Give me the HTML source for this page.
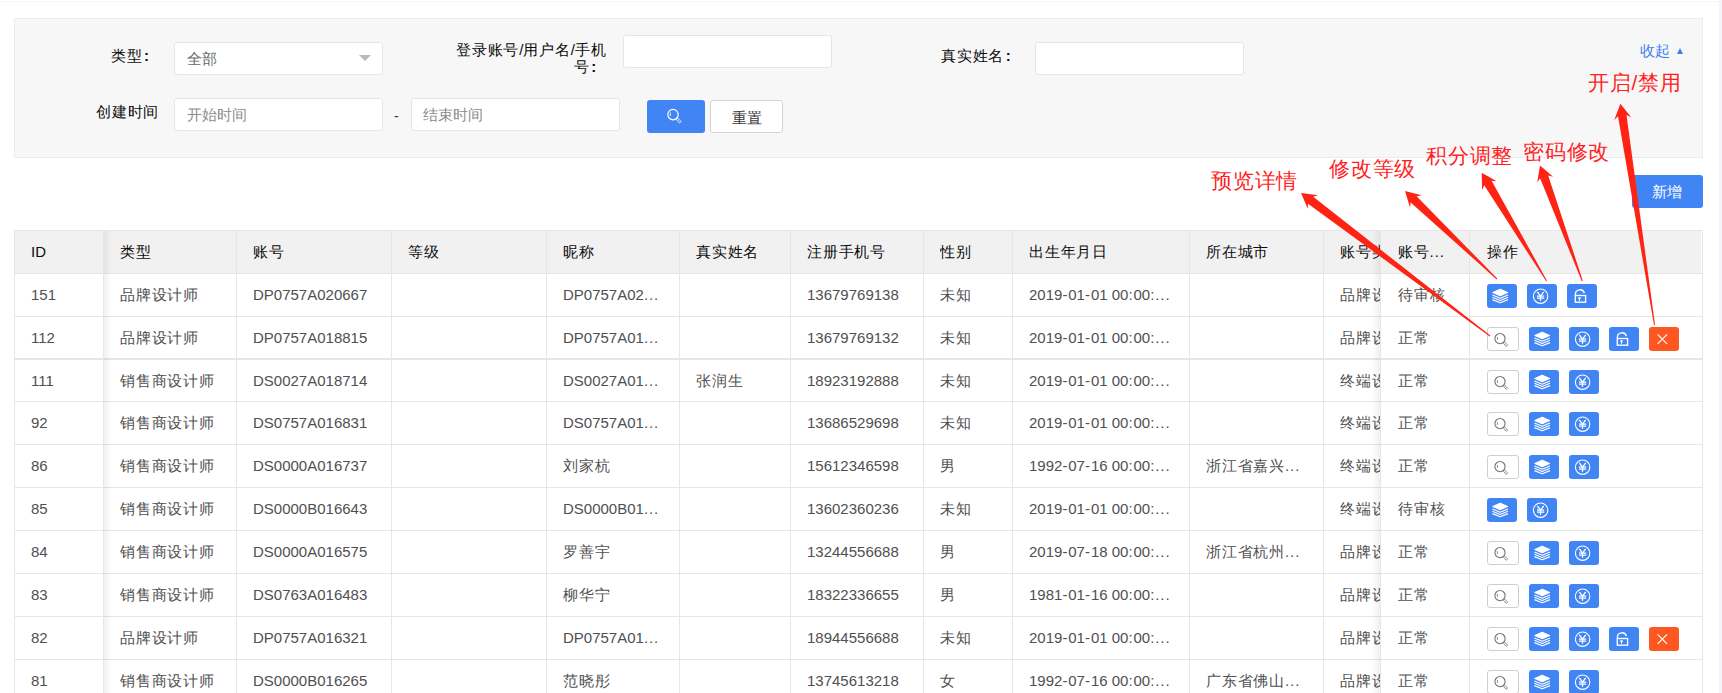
<!DOCTYPE html><html><head><meta charset="utf-8"><style>
*{margin:0;padding:0;box-sizing:border-box}
html,body{width:1722px;height:693px;overflow:hidden;background:#fff}
body{position:relative;font-family:"Liberation Sans",sans-serif;}
.a{position:absolute}
.t{position:absolute;white-space:nowrap;line-height:1}
.lbl{font-size:15px;color:#0a0a0a}
.inp{position:absolute;background:#fff;border:1px solid #e5e5e6;border-radius:3px}
.ph{position:absolute;font-size:15px;color:#8c8c8c;white-space:nowrap;line-height:1}
.hl{position:absolute;height:1px;background:#e6e6e6}
.vl{position:absolute;width:1px;background:#e6e6e6}
.c{position:absolute;white-space:nowrap;line-height:1;font-size:15px;color:#505050;overflow:hidden}
.h{position:absolute;white-space:nowrap;line-height:1;font-size:15px;color:#0c0c0c;overflow:hidden}
.btn{position:absolute;width:30px;height:24px;border-radius:3px;background:#4185f4}
.btn svg{position:absolute;left:0;top:0}
.sbtn{position:absolute;width:32px;height:24px;border-radius:3px;background:#fff;border:1px solid #cfcfcf}
.rbtn{position:absolute;width:30px;height:24px;border-radius:3px;background:#fe5722}
.k{letter-spacing:0.8px}
.p{letter-spacing:0.9px}
.ann{position:absolute;white-space:nowrap;line-height:1;font-size:21px;color:#ff1f1f;letter-spacing:0.8px}
</style></head><body>
<div class="a" style="left:0;top:1px;width:1719px;height:1px;background:#f6f6f6"></div>
<div class="a" style="left:1719px;top:0;width:3px;height:693px;background:#f4f5f8"></div>
<div class="a" style="left:14px;top:18px;width:1689px;height:140px;background:#f7f7f7;border:1px solid #ececee"></div>
<div class="t lbl" style="left:111px;top:48px"><span class="k">类型</span><span style="margin-left:1.5px;font-weight:bold">:</span></div>
<div class="inp" style="left:174px;top:42px;width:209px;height:33px"></div>
<div class="ph" style="left:187px;top:51px;color:#6a6a6a">全部</div>
<div class="a" style="left:359px;top:55px;width:0;height:0;border-left:6px solid transparent;border-right:6px solid transparent;border-top:6px solid #b9b9b9"></div>
<div class="t lbl" style="left:456px;top:42px"><span class="k">登录账号</span>/<span class="k">用户名</span>/<span class="k">手机</span></div>
<div class="t lbl" style="left:574px;top:59px"><span class="k">号</span><span style="margin-left:1.5px;font-weight:bold">:</span></div>
<div class="inp" style="left:623px;top:35px;width:209px;height:33px"></div>
<div class="t lbl" style="left:941px;top:48px"><span class="k">真实姓名</span><span style="margin-left:1.5px;font-weight:bold">:</span></div>
<div class="inp" style="left:1035px;top:42px;width:209px;height:33px"></div>
<div class="t" style="left:1640px;top:44px;font-size:14.5px;color:#3d7ef0">收起</div>
<div class="a" style="left:1677px;top:48px;width:0;height:0;border-left:3.5px solid transparent;border-right:3.5px solid transparent;border-bottom:6px solid #3d7ef0"></div>
<div class="t lbl" style="left:96px;top:104px"><span class="k">创建时间</span></div>
<div class="inp" style="left:174px;top:98px;width:209px;height:33px"></div>
<div class="ph" style="left:187px;top:107px">开始时间</div>
<div class="t" style="left:394px;top:109px;font-size:14px;color:#333">-</div>
<div class="inp" style="left:411px;top:98px;width:209px;height:33px"></div>
<div class="ph" style="left:423px;top:107px">结束时间</div>
<div class="a" style="left:647px;top:100px;width:58px;height:33px;border-radius:3px;background:#4185f4"><svg width="58" height="33" style="position:absolute;left:0;top:0"><circle cx="26" cy="14.6" r="5.2" fill="none" stroke="#fff" stroke-width="1.2"/><rect x="-1" y="-2.7" width="2" height="5.4" transform="translate(31.4 20.3) rotate(-45)" fill="none" stroke="#fff" stroke-width="0.9"/><path d="M23.3 12.5 V16" stroke="#fff" stroke-width="0.9"/></svg></div>
<div class="a" style="left:710px;top:100px;width:73px;height:33px;border-radius:3px;background:#fff;border:1px solid #d4d4d4"></div>
<div class="t" style="left:732px;top:110px;font-size:15px;color:#383838">重置</div>
<div class="a" style="left:1632px;top:175px;width:71px;height:33px;border-radius:3px;background:#4185f4"></div>
<div class="t" style="left:1652px;top:184px;font-size:15px;color:#fff">新增</div>
<div class="a" style="left:15px;top:231px;width:1686px;height:42px;background:#f1f1f1"></div>
<div class="hl" style="left:14px;top:230px;width:1689px"></div>
<div class="vl" style="left:14px;top:230px;height:463px"></div>
<div class="vl" style="left:1702px;top:230px;height:463px"></div>
<div class="hl" style="left:14px;top:273px;width:1689px"></div>
<div class="hl" style="left:14px;top:316px;width:1689px"></div>
<div class="hl" style="left:14px;top:358px;width:1689px"></div>
<div class="hl" style="left:14px;top:359px;width:1689px"></div>
<div class="hl" style="left:14px;top:401px;width:1689px"></div>
<div class="hl" style="left:14px;top:444px;width:1689px"></div>
<div class="hl" style="left:14px;top:487px;width:1689px"></div>
<div class="hl" style="left:14px;top:530px;width:1689px"></div>
<div class="hl" style="left:14px;top:573px;width:1689px"></div>
<div class="hl" style="left:14px;top:616px;width:1689px"></div>
<div class="hl" style="left:14px;top:659px;width:1689px"></div>
<div class="vl" style="left:103px;top:230px;height:463px"></div>
<div class="vl" style="left:236px;top:230px;height:463px"></div>
<div class="vl" style="left:391px;top:230px;height:463px"></div>
<div class="vl" style="left:546px;top:230px;height:463px"></div>
<div class="vl" style="left:679px;top:230px;height:463px"></div>
<div class="vl" style="left:790px;top:230px;height:463px"></div>
<div class="vl" style="left:923px;top:230px;height:463px"></div>
<div class="vl" style="left:1012px;top:230px;height:463px"></div>
<div class="vl" style="left:1189px;top:230px;height:463px"></div>
<div class="vl" style="left:1323px;top:230px;height:463px"></div>
<div class="vl" style="left:1469px;top:230px;height:463px"></div>
<div class="h" style="left:31px;top:244.0px;width:70px;height:17px;line-height:15px">ID</div>
<div class="h" style="left:120px;top:244.0px;width:114px;height:17px;line-height:15px"><span class="k">类型</span></div>
<div class="h" style="left:253px;top:244.0px;width:136px;height:17px;line-height:15px"><span class="k">账号</span></div>
<div class="h" style="left:408px;top:244.0px;width:136px;height:17px;line-height:15px"><span class="k">等级</span></div>
<div class="h" style="left:563px;top:244.0px;width:114px;height:17px;line-height:15px"><span class="k">昵称</span></div>
<div class="h" style="left:696px;top:244.0px;width:92px;height:17px;line-height:15px"><span class="k">真实姓名</span></div>
<div class="h" style="left:807px;top:244.0px;width:114px;height:17px;line-height:15px"><span class="k">注册手机号</span></div>
<div class="h" style="left:940px;top:244.0px;width:70px;height:17px;line-height:15px"><span class="k">性别</span></div>
<div class="h" style="left:1029px;top:244.0px;width:158px;height:17px;line-height:15px"><span class="k">出生年月日</span></div>
<div class="h" style="left:1206px;top:244.0px;width:115px;height:17px;line-height:15px"><span class="k">所在城市</span></div>
<div class="h" style="left:1340px;top:244.0px;width:40px;height:17px;line-height:15px"><span class="k">账号类型</span></div>
<div class="h" style="left:1398px;top:244.0px;width:69px;height:17px;line-height:15px"><span class="k">账号</span><span class="p">...</span></div>
<div class="h" style="left:1487px;top:244.0px;width:213px;height:17px;line-height:15px"><span class="k">操作</span></div>
<div class="c" style="left:31px;top:287.0px;width:70px;height:17px;line-height:15px">151</div>
<div class="c" style="left:120px;top:287.0px;width:114px;height:17px;line-height:15px"><span class="k">品牌设计师</span></div>
<div class="c" style="left:253px;top:287.0px;width:136px;height:17px;line-height:15px">DP0757A020667</div>
<div class="c" style="left:563px;top:287.0px;width:114px;height:17px;line-height:15px">DP0757A02<span class="p">...</span></div>
<div class="c" style="left:807px;top:287.0px;width:114px;height:17px;line-height:15px">13679769138</div>
<div class="c" style="left:940px;top:287.0px;width:70px;height:17px;line-height:15px"><span class="k">未知</span></div>
<div class="c" style="left:1029px;top:287.0px;width:158px;height:17px;line-height:15px">2019<span class="p">-</span>01<span class="p">-</span>01 00<span class="p">:</span>00<span class="p">:...</span></div>
<div class="c" style="left:1340px;top:287.0px;width:40px;height:17px;line-height:15px"><span class="k">品牌设计师</span></div>
<div class="c" style="left:1398px;top:287.0px;width:69px;height:17px;line-height:15px"><span class="k">待审核</span></div>
<div class="c" style="left:31px;top:330.0px;width:70px;height:17px;line-height:15px">112</div>
<div class="c" style="left:120px;top:330.0px;width:114px;height:17px;line-height:15px"><span class="k">品牌设计师</span></div>
<div class="c" style="left:253px;top:330.0px;width:136px;height:17px;line-height:15px">DP0757A018815</div>
<div class="c" style="left:563px;top:330.0px;width:114px;height:17px;line-height:15px">DP0757A01<span class="p">...</span></div>
<div class="c" style="left:807px;top:330.0px;width:114px;height:17px;line-height:15px">13679769132</div>
<div class="c" style="left:940px;top:330.0px;width:70px;height:17px;line-height:15px"><span class="k">未知</span></div>
<div class="c" style="left:1029px;top:330.0px;width:158px;height:17px;line-height:15px">2019<span class="p">-</span>01<span class="p">-</span>01 00<span class="p">:</span>00<span class="p">:...</span></div>
<div class="c" style="left:1340px;top:330.0px;width:40px;height:17px;line-height:15px"><span class="k">品牌设计师</span></div>
<div class="c" style="left:1398px;top:330.0px;width:69px;height:17px;line-height:15px"><span class="k">正常</span></div>
<div class="c" style="left:31px;top:373.0px;width:70px;height:17px;line-height:15px">111</div>
<div class="c" style="left:120px;top:373.0px;width:114px;height:17px;line-height:15px"><span class="k">销售商设计师</span></div>
<div class="c" style="left:253px;top:373.0px;width:136px;height:17px;line-height:15px">DS0027A018714</div>
<div class="c" style="left:563px;top:373.0px;width:114px;height:17px;line-height:15px">DS0027A01<span class="p">...</span></div>
<div class="c" style="left:696px;top:373.0px;width:92px;height:17px;line-height:15px"><span class="k">张润生</span></div>
<div class="c" style="left:807px;top:373.0px;width:114px;height:17px;line-height:15px">18923192888</div>
<div class="c" style="left:940px;top:373.0px;width:70px;height:17px;line-height:15px"><span class="k">未知</span></div>
<div class="c" style="left:1029px;top:373.0px;width:158px;height:17px;line-height:15px">2019<span class="p">-</span>01<span class="p">-</span>01 00<span class="p">:</span>00<span class="p">:...</span></div>
<div class="c" style="left:1340px;top:373.0px;width:40px;height:17px;line-height:15px"><span class="k">终端设计师</span></div>
<div class="c" style="left:1398px;top:373.0px;width:69px;height:17px;line-height:15px"><span class="k">正常</span></div>
<div class="c" style="left:31px;top:415.0px;width:70px;height:17px;line-height:15px">92</div>
<div class="c" style="left:120px;top:415.0px;width:114px;height:17px;line-height:15px"><span class="k">销售商设计师</span></div>
<div class="c" style="left:253px;top:415.0px;width:136px;height:17px;line-height:15px">DS0757A016831</div>
<div class="c" style="left:563px;top:415.0px;width:114px;height:17px;line-height:15px">DS0757A01<span class="p">...</span></div>
<div class="c" style="left:807px;top:415.0px;width:114px;height:17px;line-height:15px">13686529698</div>
<div class="c" style="left:940px;top:415.0px;width:70px;height:17px;line-height:15px"><span class="k">未知</span></div>
<div class="c" style="left:1029px;top:415.0px;width:158px;height:17px;line-height:15px">2019<span class="p">-</span>01<span class="p">-</span>01 00<span class="p">:</span>00<span class="p">:...</span></div>
<div class="c" style="left:1340px;top:415.0px;width:40px;height:17px;line-height:15px"><span class="k">终端设计师</span></div>
<div class="c" style="left:1398px;top:415.0px;width:69px;height:17px;line-height:15px"><span class="k">正常</span></div>
<div class="c" style="left:31px;top:458.0px;width:70px;height:17px;line-height:15px">86</div>
<div class="c" style="left:120px;top:458.0px;width:114px;height:17px;line-height:15px"><span class="k">销售商设计师</span></div>
<div class="c" style="left:253px;top:458.0px;width:136px;height:17px;line-height:15px">DS0000A016737</div>
<div class="c" style="left:563px;top:458.0px;width:114px;height:17px;line-height:15px"><span class="k">刘家杭</span></div>
<div class="c" style="left:807px;top:458.0px;width:114px;height:17px;line-height:15px">15612346598</div>
<div class="c" style="left:940px;top:458.0px;width:70px;height:17px;line-height:15px"><span class="k">男</span></div>
<div class="c" style="left:1029px;top:458.0px;width:158px;height:17px;line-height:15px">1992<span class="p">-</span>07<span class="p">-</span>16 00<span class="p">:</span>00<span class="p">:...</span></div>
<div class="c" style="left:1206px;top:458.0px;width:115px;height:17px;line-height:15px"><span class="k">浙江省嘉兴</span><span class="p">...</span></div>
<div class="c" style="left:1340px;top:458.0px;width:40px;height:17px;line-height:15px"><span class="k">终端设计师</span></div>
<div class="c" style="left:1398px;top:458.0px;width:69px;height:17px;line-height:15px"><span class="k">正常</span></div>
<div class="c" style="left:31px;top:501.0px;width:70px;height:17px;line-height:15px">85</div>
<div class="c" style="left:120px;top:501.0px;width:114px;height:17px;line-height:15px"><span class="k">销售商设计师</span></div>
<div class="c" style="left:253px;top:501.0px;width:136px;height:17px;line-height:15px">DS0000B016643</div>
<div class="c" style="left:563px;top:501.0px;width:114px;height:17px;line-height:15px">DS0000B01<span class="p">...</span></div>
<div class="c" style="left:807px;top:501.0px;width:114px;height:17px;line-height:15px">13602360236</div>
<div class="c" style="left:940px;top:501.0px;width:70px;height:17px;line-height:15px"><span class="k">未知</span></div>
<div class="c" style="left:1029px;top:501.0px;width:158px;height:17px;line-height:15px">2019<span class="p">-</span>01<span class="p">-</span>01 00<span class="p">:</span>00<span class="p">:...</span></div>
<div class="c" style="left:1340px;top:501.0px;width:40px;height:17px;line-height:15px"><span class="k">终端设计师</span></div>
<div class="c" style="left:1398px;top:501.0px;width:69px;height:17px;line-height:15px"><span class="k">待审核</span></div>
<div class="c" style="left:31px;top:544.0px;width:70px;height:17px;line-height:15px">84</div>
<div class="c" style="left:120px;top:544.0px;width:114px;height:17px;line-height:15px"><span class="k">销售商设计师</span></div>
<div class="c" style="left:253px;top:544.0px;width:136px;height:17px;line-height:15px">DS0000A016575</div>
<div class="c" style="left:563px;top:544.0px;width:114px;height:17px;line-height:15px"><span class="k">罗善宇</span></div>
<div class="c" style="left:807px;top:544.0px;width:114px;height:17px;line-height:15px">13244556688</div>
<div class="c" style="left:940px;top:544.0px;width:70px;height:17px;line-height:15px"><span class="k">男</span></div>
<div class="c" style="left:1029px;top:544.0px;width:158px;height:17px;line-height:15px">2019<span class="p">-</span>07<span class="p">-</span>18 00<span class="p">:</span>00<span class="p">:...</span></div>
<div class="c" style="left:1206px;top:544.0px;width:115px;height:17px;line-height:15px"><span class="k">浙江省杭州</span><span class="p">...</span></div>
<div class="c" style="left:1340px;top:544.0px;width:40px;height:17px;line-height:15px"><span class="k">品牌设计师</span></div>
<div class="c" style="left:1398px;top:544.0px;width:69px;height:17px;line-height:15px"><span class="k">正常</span></div>
<div class="c" style="left:31px;top:587.0px;width:70px;height:17px;line-height:15px">83</div>
<div class="c" style="left:120px;top:587.0px;width:114px;height:17px;line-height:15px"><span class="k">销售商设计师</span></div>
<div class="c" style="left:253px;top:587.0px;width:136px;height:17px;line-height:15px">DS0763A016483</div>
<div class="c" style="left:563px;top:587.0px;width:114px;height:17px;line-height:15px"><span class="k">柳华宁</span></div>
<div class="c" style="left:807px;top:587.0px;width:114px;height:17px;line-height:15px">18322336655</div>
<div class="c" style="left:940px;top:587.0px;width:70px;height:17px;line-height:15px"><span class="k">男</span></div>
<div class="c" style="left:1029px;top:587.0px;width:158px;height:17px;line-height:15px">1981<span class="p">-</span>01<span class="p">-</span>16 00<span class="p">:</span>00<span class="p">:...</span></div>
<div class="c" style="left:1340px;top:587.0px;width:40px;height:17px;line-height:15px"><span class="k">品牌设计师</span></div>
<div class="c" style="left:1398px;top:587.0px;width:69px;height:17px;line-height:15px"><span class="k">正常</span></div>
<div class="c" style="left:31px;top:630.0px;width:70px;height:17px;line-height:15px">82</div>
<div class="c" style="left:120px;top:630.0px;width:114px;height:17px;line-height:15px"><span class="k">品牌设计师</span></div>
<div class="c" style="left:253px;top:630.0px;width:136px;height:17px;line-height:15px">DP0757A016321</div>
<div class="c" style="left:563px;top:630.0px;width:114px;height:17px;line-height:15px">DP0757A01<span class="p">...</span></div>
<div class="c" style="left:807px;top:630.0px;width:114px;height:17px;line-height:15px">18944556688</div>
<div class="c" style="left:940px;top:630.0px;width:70px;height:17px;line-height:15px"><span class="k">未知</span></div>
<div class="c" style="left:1029px;top:630.0px;width:158px;height:17px;line-height:15px">2019<span class="p">-</span>01<span class="p">-</span>01 00<span class="p">:</span>00<span class="p">:...</span></div>
<div class="c" style="left:1340px;top:630.0px;width:40px;height:17px;line-height:15px"><span class="k">品牌设计师</span></div>
<div class="c" style="left:1398px;top:630.0px;width:69px;height:17px;line-height:15px"><span class="k">正常</span></div>
<div class="c" style="left:31px;top:673.0px;width:70px;height:17px;line-height:15px">81</div>
<div class="c" style="left:120px;top:673.0px;width:114px;height:17px;line-height:15px"><span class="k">销售商设计师</span></div>
<div class="c" style="left:253px;top:673.0px;width:136px;height:17px;line-height:15px">DS0000B016265</div>
<div class="c" style="left:563px;top:673.0px;width:114px;height:17px;line-height:15px"><span class="k">范晓彤</span></div>
<div class="c" style="left:807px;top:673.0px;width:114px;height:17px;line-height:15px">13745613218</div>
<div class="c" style="left:940px;top:673.0px;width:70px;height:17px;line-height:15px"><span class="k">女</span></div>
<div class="c" style="left:1029px;top:673.0px;width:158px;height:17px;line-height:15px">1992<span class="p">-</span>07<span class="p">-</span>16 00<span class="p">:</span>00<span class="p">:...</span></div>
<div class="c" style="left:1206px;top:673.0px;width:115px;height:17px;line-height:15px"><span class="k">广东省佛山</span><span class="p">...</span></div>
<div class="c" style="left:1340px;top:673.0px;width:40px;height:17px;line-height:15px"><span class="k">品牌设计师</span></div>
<div class="c" style="left:1398px;top:673.0px;width:69px;height:17px;line-height:15px"><span class="k">正常</span></div>
<div class="a" style="left:104px;top:231px;width:8px;height:462px;background:linear-gradient(to right,rgba(0,0,0,0.05),rgba(0,0,0,0))"></div>
<div class="a" style="left:1372px;top:231px;width:8px;height:462px;background:linear-gradient(to left,rgba(0,0,0,0.06),rgba(0,0,0,0))"></div>
<div class="vl" style="left:1380px;top:230px;height:463px"></div>
<div class="btn" style="left:1487px;top:284px"><svg width="30" height="24"><g fill="none" stroke="#fff" stroke-width="1.15" stroke-linejoin="round"><path d="M13.2 5.3 L20.5 8.5 L13.2 11.7 L5.9 8.5 Z" fill="#fff"/><path d="M5.4 11 L13.2 14.2 L21 11"/><path d="M5.4 13.3 L13.2 16.5 L21 13.3"/><path d="M5.4 15.6 L13.2 18.8 L21 15.6"/></g></svg></div>
<div class="btn" style="left:1527px;top:284px"><svg width="30" height="24"><g fill="none" stroke="#fff" stroke-width="1.1"><circle cx="13.6" cy="12.15" r="7.2"/><path d="M10.3 7.9 L13.5 12.2 L16.7 7.9" stroke-width="1.3"/><path d="M10 12.1 H17.2 M10 14.1 H17.2" stroke-width="1.3"/><path d="M13.5 12 V16.8" stroke-width="1.3"/></g></svg></div>
<div class="btn" style="left:1567px;top:284px"><svg width="30" height="24"><g fill="none" stroke="#fff" stroke-width="1.35"><path d="M8.4 11.2 V10.7 A4.6 4.6 0 0 1 17.4 9.1"/><rect x="8.3" y="11.5" width="10.3" height="6.7"/></g><path d="M11.3 13.3 h2.4 v1.5 l-0.7 0.5 v1.5 h-1 v-1.5 l-0.7 -0.5 z" fill="#fff"/></svg></div>
<div class="sbtn" style="left:1487px;top:327px"><svg width="30" height="22"><g fill="none" stroke="#747474" stroke-width="1.1"><circle cx="12" cy="10.6" r="5.1"/><rect x="-0.9" y="-2" width="1.8" height="4.4" transform="translate(17.3 16) rotate(-45)" stroke="#858585" stroke-width="0.9"/></g><path d="M9.4 9 V12" stroke="#8a8a8a" stroke-width="0.9"/></svg></div>
<div class="btn" style="left:1529px;top:327px"><svg width="30" height="24"><g fill="none" stroke="#fff" stroke-width="1.15" stroke-linejoin="round"><path d="M13.2 5.3 L20.5 8.5 L13.2 11.7 L5.9 8.5 Z" fill="#fff"/><path d="M5.4 11 L13.2 14.2 L21 11"/><path d="M5.4 13.3 L13.2 16.5 L21 13.3"/><path d="M5.4 15.6 L13.2 18.8 L21 15.6"/></g></svg></div>
<div class="btn" style="left:1569px;top:327px"><svg width="30" height="24"><g fill="none" stroke="#fff" stroke-width="1.1"><circle cx="13.6" cy="12.15" r="7.2"/><path d="M10.3 7.9 L13.5 12.2 L16.7 7.9" stroke-width="1.3"/><path d="M10 12.1 H17.2 M10 14.1 H17.2" stroke-width="1.3"/><path d="M13.5 12 V16.8" stroke-width="1.3"/></g></svg></div>
<div class="btn" style="left:1609px;top:327px"><svg width="30" height="24"><g fill="none" stroke="#fff" stroke-width="1.35"><path d="M8.4 11.2 V10.7 A4.6 4.6 0 0 1 17.4 9.1"/><rect x="8.3" y="11.5" width="10.3" height="6.7"/></g><path d="M11.3 13.3 h2.4 v1.5 l-0.7 0.5 v1.5 h-1 v-1.5 l-0.7 -0.5 z" fill="#fff"/></svg></div>
<div class="rbtn" style="left:1649px;top:327px"><svg width="30" height="24"><g stroke="#fff" stroke-width="1.2"><path d="M8.6 7.4 L18 16.8 M18 7.4 L8.6 16.8"/></g></svg></div>
<div class="sbtn" style="left:1487px;top:370px"><svg width="30" height="22"><g fill="none" stroke="#747474" stroke-width="1.1"><circle cx="12" cy="10.6" r="5.1"/><rect x="-0.9" y="-2" width="1.8" height="4.4" transform="translate(17.3 16) rotate(-45)" stroke="#858585" stroke-width="0.9"/></g><path d="M9.4 9 V12" stroke="#8a8a8a" stroke-width="0.9"/></svg></div>
<div class="btn" style="left:1529px;top:370px"><svg width="30" height="24"><g fill="none" stroke="#fff" stroke-width="1.15" stroke-linejoin="round"><path d="M13.2 5.3 L20.5 8.5 L13.2 11.7 L5.9 8.5 Z" fill="#fff"/><path d="M5.4 11 L13.2 14.2 L21 11"/><path d="M5.4 13.3 L13.2 16.5 L21 13.3"/><path d="M5.4 15.6 L13.2 18.8 L21 15.6"/></g></svg></div>
<div class="btn" style="left:1569px;top:370px"><svg width="30" height="24"><g fill="none" stroke="#fff" stroke-width="1.1"><circle cx="13.6" cy="12.15" r="7.2"/><path d="M10.3 7.9 L13.5 12.2 L16.7 7.9" stroke-width="1.3"/><path d="M10 12.1 H17.2 M10 14.1 H17.2" stroke-width="1.3"/><path d="M13.5 12 V16.8" stroke-width="1.3"/></g></svg></div>
<div class="sbtn" style="left:1487px;top:412px"><svg width="30" height="22"><g fill="none" stroke="#747474" stroke-width="1.1"><circle cx="12" cy="10.6" r="5.1"/><rect x="-0.9" y="-2" width="1.8" height="4.4" transform="translate(17.3 16) rotate(-45)" stroke="#858585" stroke-width="0.9"/></g><path d="M9.4 9 V12" stroke="#8a8a8a" stroke-width="0.9"/></svg></div>
<div class="btn" style="left:1529px;top:412px"><svg width="30" height="24"><g fill="none" stroke="#fff" stroke-width="1.15" stroke-linejoin="round"><path d="M13.2 5.3 L20.5 8.5 L13.2 11.7 L5.9 8.5 Z" fill="#fff"/><path d="M5.4 11 L13.2 14.2 L21 11"/><path d="M5.4 13.3 L13.2 16.5 L21 13.3"/><path d="M5.4 15.6 L13.2 18.8 L21 15.6"/></g></svg></div>
<div class="btn" style="left:1569px;top:412px"><svg width="30" height="24"><g fill="none" stroke="#fff" stroke-width="1.1"><circle cx="13.6" cy="12.15" r="7.2"/><path d="M10.3 7.9 L13.5 12.2 L16.7 7.9" stroke-width="1.3"/><path d="M10 12.1 H17.2 M10 14.1 H17.2" stroke-width="1.3"/><path d="M13.5 12 V16.8" stroke-width="1.3"/></g></svg></div>
<div class="sbtn" style="left:1487px;top:455px"><svg width="30" height="22"><g fill="none" stroke="#747474" stroke-width="1.1"><circle cx="12" cy="10.6" r="5.1"/><rect x="-0.9" y="-2" width="1.8" height="4.4" transform="translate(17.3 16) rotate(-45)" stroke="#858585" stroke-width="0.9"/></g><path d="M9.4 9 V12" stroke="#8a8a8a" stroke-width="0.9"/></svg></div>
<div class="btn" style="left:1529px;top:455px"><svg width="30" height="24"><g fill="none" stroke="#fff" stroke-width="1.15" stroke-linejoin="round"><path d="M13.2 5.3 L20.5 8.5 L13.2 11.7 L5.9 8.5 Z" fill="#fff"/><path d="M5.4 11 L13.2 14.2 L21 11"/><path d="M5.4 13.3 L13.2 16.5 L21 13.3"/><path d="M5.4 15.6 L13.2 18.8 L21 15.6"/></g></svg></div>
<div class="btn" style="left:1569px;top:455px"><svg width="30" height="24"><g fill="none" stroke="#fff" stroke-width="1.1"><circle cx="13.6" cy="12.15" r="7.2"/><path d="M10.3 7.9 L13.5 12.2 L16.7 7.9" stroke-width="1.3"/><path d="M10 12.1 H17.2 M10 14.1 H17.2" stroke-width="1.3"/><path d="M13.5 12 V16.8" stroke-width="1.3"/></g></svg></div>
<div class="btn" style="left:1487px;top:498px"><svg width="30" height="24"><g fill="none" stroke="#fff" stroke-width="1.15" stroke-linejoin="round"><path d="M13.2 5.3 L20.5 8.5 L13.2 11.7 L5.9 8.5 Z" fill="#fff"/><path d="M5.4 11 L13.2 14.2 L21 11"/><path d="M5.4 13.3 L13.2 16.5 L21 13.3"/><path d="M5.4 15.6 L13.2 18.8 L21 15.6"/></g></svg></div>
<div class="btn" style="left:1527px;top:498px"><svg width="30" height="24"><g fill="none" stroke="#fff" stroke-width="1.1"><circle cx="13.6" cy="12.15" r="7.2"/><path d="M10.3 7.9 L13.5 12.2 L16.7 7.9" stroke-width="1.3"/><path d="M10 12.1 H17.2 M10 14.1 H17.2" stroke-width="1.3"/><path d="M13.5 12 V16.8" stroke-width="1.3"/></g></svg></div>
<div class="sbtn" style="left:1487px;top:541px"><svg width="30" height="22"><g fill="none" stroke="#747474" stroke-width="1.1"><circle cx="12" cy="10.6" r="5.1"/><rect x="-0.9" y="-2" width="1.8" height="4.4" transform="translate(17.3 16) rotate(-45)" stroke="#858585" stroke-width="0.9"/></g><path d="M9.4 9 V12" stroke="#8a8a8a" stroke-width="0.9"/></svg></div>
<div class="btn" style="left:1529px;top:541px"><svg width="30" height="24"><g fill="none" stroke="#fff" stroke-width="1.15" stroke-linejoin="round"><path d="M13.2 5.3 L20.5 8.5 L13.2 11.7 L5.9 8.5 Z" fill="#fff"/><path d="M5.4 11 L13.2 14.2 L21 11"/><path d="M5.4 13.3 L13.2 16.5 L21 13.3"/><path d="M5.4 15.6 L13.2 18.8 L21 15.6"/></g></svg></div>
<div class="btn" style="left:1569px;top:541px"><svg width="30" height="24"><g fill="none" stroke="#fff" stroke-width="1.1"><circle cx="13.6" cy="12.15" r="7.2"/><path d="M10.3 7.9 L13.5 12.2 L16.7 7.9" stroke-width="1.3"/><path d="M10 12.1 H17.2 M10 14.1 H17.2" stroke-width="1.3"/><path d="M13.5 12 V16.8" stroke-width="1.3"/></g></svg></div>
<div class="sbtn" style="left:1487px;top:584px"><svg width="30" height="22"><g fill="none" stroke="#747474" stroke-width="1.1"><circle cx="12" cy="10.6" r="5.1"/><rect x="-0.9" y="-2" width="1.8" height="4.4" transform="translate(17.3 16) rotate(-45)" stroke="#858585" stroke-width="0.9"/></g><path d="M9.4 9 V12" stroke="#8a8a8a" stroke-width="0.9"/></svg></div>
<div class="btn" style="left:1529px;top:584px"><svg width="30" height="24"><g fill="none" stroke="#fff" stroke-width="1.15" stroke-linejoin="round"><path d="M13.2 5.3 L20.5 8.5 L13.2 11.7 L5.9 8.5 Z" fill="#fff"/><path d="M5.4 11 L13.2 14.2 L21 11"/><path d="M5.4 13.3 L13.2 16.5 L21 13.3"/><path d="M5.4 15.6 L13.2 18.8 L21 15.6"/></g></svg></div>
<div class="btn" style="left:1569px;top:584px"><svg width="30" height="24"><g fill="none" stroke="#fff" stroke-width="1.1"><circle cx="13.6" cy="12.15" r="7.2"/><path d="M10.3 7.9 L13.5 12.2 L16.7 7.9" stroke-width="1.3"/><path d="M10 12.1 H17.2 M10 14.1 H17.2" stroke-width="1.3"/><path d="M13.5 12 V16.8" stroke-width="1.3"/></g></svg></div>
<div class="sbtn" style="left:1487px;top:627px"><svg width="30" height="22"><g fill="none" stroke="#747474" stroke-width="1.1"><circle cx="12" cy="10.6" r="5.1"/><rect x="-0.9" y="-2" width="1.8" height="4.4" transform="translate(17.3 16) rotate(-45)" stroke="#858585" stroke-width="0.9"/></g><path d="M9.4 9 V12" stroke="#8a8a8a" stroke-width="0.9"/></svg></div>
<div class="btn" style="left:1529px;top:627px"><svg width="30" height="24"><g fill="none" stroke="#fff" stroke-width="1.15" stroke-linejoin="round"><path d="M13.2 5.3 L20.5 8.5 L13.2 11.7 L5.9 8.5 Z" fill="#fff"/><path d="M5.4 11 L13.2 14.2 L21 11"/><path d="M5.4 13.3 L13.2 16.5 L21 13.3"/><path d="M5.4 15.6 L13.2 18.8 L21 15.6"/></g></svg></div>
<div class="btn" style="left:1569px;top:627px"><svg width="30" height="24"><g fill="none" stroke="#fff" stroke-width="1.1"><circle cx="13.6" cy="12.15" r="7.2"/><path d="M10.3 7.9 L13.5 12.2 L16.7 7.9" stroke-width="1.3"/><path d="M10 12.1 H17.2 M10 14.1 H17.2" stroke-width="1.3"/><path d="M13.5 12 V16.8" stroke-width="1.3"/></g></svg></div>
<div class="btn" style="left:1609px;top:627px"><svg width="30" height="24"><g fill="none" stroke="#fff" stroke-width="1.35"><path d="M8.4 11.2 V10.7 A4.6 4.6 0 0 1 17.4 9.1"/><rect x="8.3" y="11.5" width="10.3" height="6.7"/></g><path d="M11.3 13.3 h2.4 v1.5 l-0.7 0.5 v1.5 h-1 v-1.5 l-0.7 -0.5 z" fill="#fff"/></svg></div>
<div class="rbtn" style="left:1649px;top:627px"><svg width="30" height="24"><g stroke="#fff" stroke-width="1.2"><path d="M8.6 7.4 L18 16.8 M18 7.4 L8.6 16.8"/></g></svg></div>
<div class="sbtn" style="left:1487px;top:670px"><svg width="30" height="22"><g fill="none" stroke="#747474" stroke-width="1.1"><circle cx="12" cy="10.6" r="5.1"/><rect x="-0.9" y="-2" width="1.8" height="4.4" transform="translate(17.3 16) rotate(-45)" stroke="#858585" stroke-width="0.9"/></g><path d="M9.4 9 V12" stroke="#8a8a8a" stroke-width="0.9"/></svg></div>
<div class="btn" style="left:1529px;top:670px"><svg width="30" height="24"><g fill="none" stroke="#fff" stroke-width="1.15" stroke-linejoin="round"><path d="M13.2 5.3 L20.5 8.5 L13.2 11.7 L5.9 8.5 Z" fill="#fff"/><path d="M5.4 11 L13.2 14.2 L21 11"/><path d="M5.4 13.3 L13.2 16.5 L21 13.3"/><path d="M5.4 15.6 L13.2 18.8 L21 15.6"/></g></svg></div>
<div class="btn" style="left:1569px;top:670px"><svg width="30" height="24"><g fill="none" stroke="#fff" stroke-width="1.1"><circle cx="13.6" cy="12.15" r="7.2"/><path d="M10.3 7.9 L13.5 12.2 L16.7 7.9" stroke-width="1.3"/><path d="M10 12.1 H17.2 M10 14.1 H17.2" stroke-width="1.3"/><path d="M13.5 12 V16.8" stroke-width="1.3"/></g></svg></div>
<svg class="a" style="left:0;top:0" width="1722" height="693"><polygon points="1301.0,193.0 1307.8,208.8 1308.0,203.7 1489.7,336.4 1490.3,335.6 1313.2,196.8 1318.1,195.3" fill="#ff2314"/><polygon points="1405.0,191.0 1410.0,207.5 1410.7,202.4 1496.7,279.4 1497.3,278.6 1416.6,196.2 1421.7,195.2" fill="#ff2314"/><polygon points="1481.7,172.7 1482.1,189.9 1484.2,185.2 1546.2,281.3 1547.0,280.7 1491.6,180.8 1496.7,181.2" fill="#ff2314"/><polygon points="1540.0,165.6 1537.2,182.6 1540.1,178.3 1581.8,281.2 1582.8,280.8 1548.2,175.4 1553.1,176.8" fill="#ff2314"/><polygon points="1620.4,103.8 1614.3,119.9 1618.0,116.3 1654.0,324.9 1655.0,324.7 1626.5,115.0 1631.1,117.3" fill="#ff2314"/></svg>
<div class="ann" style="left:1211px;top:170px">预览详情</div>
<div class="ann" style="left:1329px;top:158px">修改等级</div>
<div class="ann" style="left:1426px;top:145px">积分调整</div>
<div class="ann" style="left:1523px;top:141px">密码修改</div>
<div class="ann" style="left:1588px;top:72px">开启/禁用</div>
</body></html>
